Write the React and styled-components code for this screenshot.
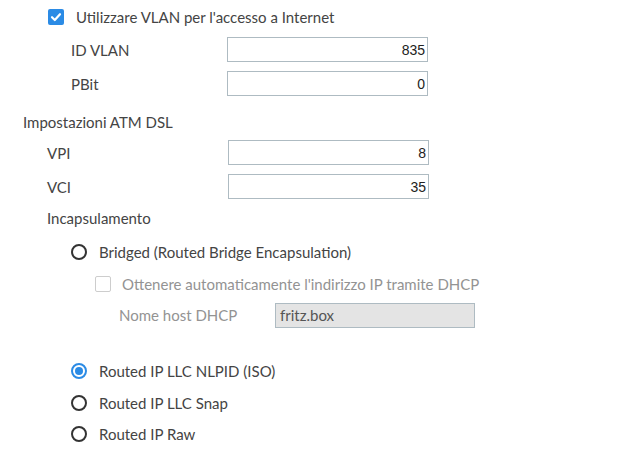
import React from 'react'
import styled, { createGlobalStyle } from 'styled-components'

const GlobalStyle = createGlobalStyle`
  body {
    margin: 0;
    background: #fff;
    font-family: 'Lato', 'Noto Sans', sans-serif;
    color: #444;
  }
`

const Page = styled.div`
  display: flex;
  flex-direction: column;
  padding-top: 4px;
  width: 635px;
  height: 450px;
  box-sizing: border-box;
  overflow: hidden;
`

const Line = styled.div`
  display: flex;
  align-items: center;
  height: ${(p) => p.$h || 24}px;
  margin-top: ${(p) => p.$top || 0}px;
  padding-left: ${(p) => p.$indent || 0}px;
  font-size: 15px;
  color: ${(p) => (p.$disabled ? '#939393' : '#444')};
`

const Label = styled.span`
  width: ${(p) => p.$w}px;
  flex: none;
`

const TextInput = styled.div`
  width: ${(p) => p.$w || 201}px;
  height: 25px;
  box-sizing: border-box;
  border: 1px solid #aebbc2;
  background: ${(p) => (p.$disabled ? '#e4e4e4' : '#fff')};
  display: flex;
  align-items: center;
  justify-content: ${(p) => (p.$left ? 'flex-start' : 'flex-end')};
  padding: 0 2px 0 4px;
  font-family: ${(p) => (p.$left ? "'Lato', sans-serif" : "'Liberation Sans', Arial, sans-serif")};
  font-size: ${(p) => (p.$left ? 15 : 14)}px;
  color: ${(p) => (p.$disabled ? '#555' : '#222')};
`

const Box = styled.span`
  width: 16px;
  height: 16px;
  box-sizing: border-box;
  border-radius: 2px;
  flex: none;
  margin-right: ${(p) => p.$gap}px;
  display: flex;
  align-items: center;
  justify-content: center;
  background: ${(p) => (p.$checked ? '#2b8be5' : '#fff')};
  border: ${(p) => (p.$checked ? 'none' : '1px solid #cdcdcd')};
`

const Radio = styled.span`
  width: 16px;
  height: 16px;
  box-sizing: border-box;
  border-radius: 50%;
  flex: none;
  margin-right: 12px;
  border: 2px solid ${(p) => (p.$checked ? '#2b8be5' : '#333')};
  display: flex;
  align-items: center;
  justify-content: center;
  &::after {
    content: '';
    display: ${(p) => (p.$checked ? 'block' : 'none')};
    width: 8px;
    height: 8px;
    border-radius: 50%;
    background: #2b8be5;
  }
`

const Check = () => (
  <svg width="12" height="12" viewBox="0 0 12 12">
    <path d="M2 6.2 L4.8 9 L10 3.2" fill="none" stroke="#fff" strokeWidth="2.2" strokeLinecap="round" strokeLinejoin="round" />
  </svg>
)

const InputRow = ({ top, indent, labelWidth, label, value, ...rest }) => (
  <Line $h={25} $top={top} $indent={indent}>
    <Label $w={labelWidth}>{label}</Label>
    <TextInput {...rest}>{value}</TextInput>
  </Line>
)

const RadioRow = ({ top, checked, children }) => (
  <Line $top={top} $indent={71}>
    <Radio $checked={checked} />
    {children}
  </Line>
)

export default function App() {
  return (
    <>
      <GlobalStyle />
      <Page>
        <Line $h={26} $indent={48}>
          <Box $checked $gap={12}>
            <Check />
          </Box>
          Utilizzare VLAN per l'accesso a Internet
        </Line>
        <InputRow top={7} indent={71} labelWidth={156} label="ID VLAN" value="835" />
        <InputRow top={9} indent={71} labelWidth={156} label="PBit" value="0" />

        <Line $h={20} $top={16} $indent={23}>Impostazioni ATM DSL</Line>
        <InputRow top={8} indent={47} labelWidth={181} label="VPI" value="8" />
        <InputRow top={9} indent={47} labelWidth={181} label="VCI" value="35" />

        <Line $h={20} $top={9} $indent={47}>Incapsulamento</Line>
        <RadioRow top={12}>Bridged (Routed Bridge Encapsulation)</RadioRow>
        <Line $top={8} $indent={95} $disabled>
          <Box $gap={11} />
          Ottenere automaticamente l'indirizzo IP tramite DHCP
        </Line>
        <Line $h={26} $top={6} $indent={119} $disabled>
          <Label $w={156}>Nome host DHCP</Label>
          <TextInput $w={200} $disabled $left>fritz.box</TextInput>
        </Line>

        <RadioRow top={31} checked>Routed IP LLC NLPID (ISO)</RadioRow>
        <RadioRow top={8}>Routed IP LLC Snap</RadioRow>
        <RadioRow top={7}>Routed IP Raw</RadioRow>
      </Page>
    </>
  )
}
